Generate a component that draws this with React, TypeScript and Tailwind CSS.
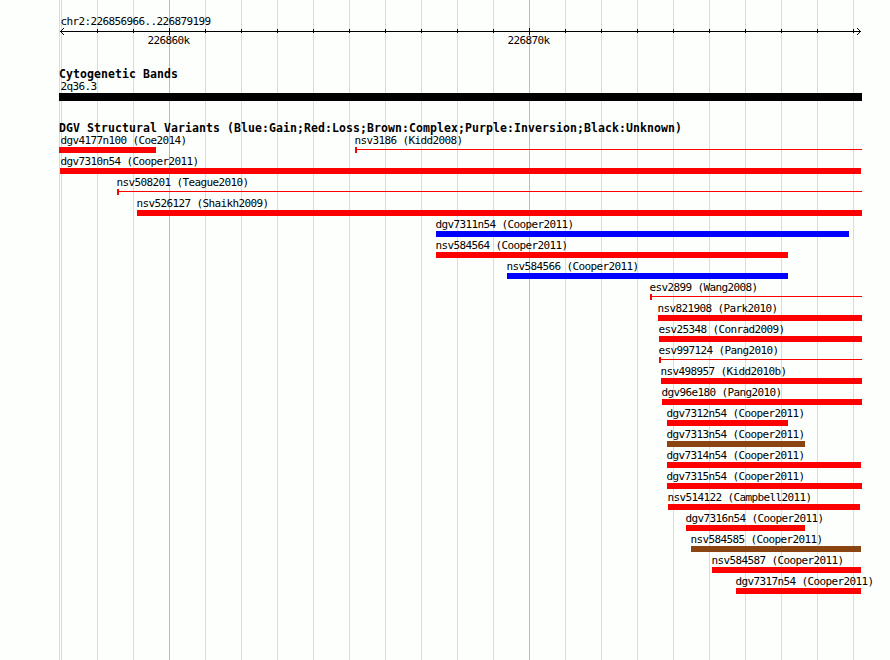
type Feature = {
  name: string
  start: number
  end: number
  labelX?: number
  color?: 'red' | 'blue' | 'brown'
  thin?: boolean
}

const barColors = {
  red: 'bg-[#ff0000]',
  blue: 'bg-[#0000ff]',
  brown: 'bg-[#8b4513]',
}

// every array is one row of the track
const rows: Feature[][] = [
  [
    { name: 'dgv4177n100 (Coe2014)', start: 59, end: 156, labelX: 60.5 },
    { name: 'nsv3186 (Kidd2008)', start: 355, end: 862, thin: true },
  ],
  [{ name: 'dgv7310n54 (Cooper2011)', start: 60, end: 861, labelX: 60.5 }],
  [{ name: 'nsv508201 (Teague2010)', start: 117, end: 862, thin: true }],
  [{ name: 'nsv526127 (Shaikh2009)', start: 137, end: 862 }],
  [{ name: 'dgv7311n54 (Cooper2011)', start: 436, end: 849, color: 'blue' }],
  [{ name: 'nsv584564 (Cooper2011)', start: 436, end: 788 }],
  [{ name: 'nsv584566 (Cooper2011)', start: 507, end: 788, color: 'blue' }],
  [{ name: 'esv2899 (Wang2008)', start: 650, end: 862, thin: true }],
  [{ name: 'nsv821908 (Park2010)', start: 658, end: 862 }],
  [{ name: 'esv25348 (Conrad2009)', start: 659, end: 862 }],
  [{ name: 'esv997124 (Pang2010)', start: 659, end: 862, thin: true }],
  [{ name: 'nsv498957 (Kidd2010b)', start: 661, end: 862 }],
  [{ name: 'dgv96e180 (Pang2010)', start: 662, end: 862 }],
  [{ name: 'dgv7312n54 (Cooper2011)', start: 667, end: 788 }],
  [{ name: 'dgv7313n54 (Cooper2011)', start: 667, end: 805, color: 'brown' }],
  [{ name: 'dgv7314n54 (Cooper2011)', start: 667, end: 861 }],
  [{ name: 'dgv7315n54 (Cooper2011)', start: 667, end: 862 }],
  [{ name: 'nsv514122 (Campbell2011)', start: 668, end: 860 }],
  [{ name: 'dgv7316n54 (Cooper2011)', start: 686, end: 805 }],
  [{ name: 'nsv584585 (Cooper2011)', start: 691, end: 861, color: 'brown' }],
  [{ name: 'nsv584587 (Cooper2011)', start: 712, end: 861 }],
  [{ name: 'dgv7317n54 (Cooper2011)', start: 736, end: 861 }],
]

// one tick per kilobase, 36px apart
const ticks = Array.from({ length: 23 }, (_, i) => 61 + i * 36)
const isMajor = (x: number) => x === 169 || x === 529

function GridLines() {
  return (
    <div className="absolute inset-0">
      {[59, ...ticks].map((x) => (
        <div
          key={x}
          className={`absolute inset-y-0 w-px ${isMajor(x) ? 'bg-[#87ceeb]' : 'bg-[#afeeee]'}`}
          style={{ left: x }}
        />
      ))}
    </div>
  )
}

function Ruler() {
  return (
    <svg className="block h-[7px] w-full" viewBox="0 0 890 7" shapeRendering="crispEdges">
      <rect x="60" y="3" width="801" height="1" />
      {ticks.slice(1).map((x) => (
        <rect key={x} x={x} y={isMajor(x) ? 0 : 1} width="1" height={isMajor(x) ? 7 : 4} />
      ))}
      {/* arrow heads */}
      {[1, 2, 3].map((d) => (
        <g key={d}>
          <rect x={60 + d} y={3 - d} width="1" height="1" />
          <rect x={60 + d} y={3 + d} width="1" height="1" />
          <rect x={860 - d} y={3 - d} width="1" height="1" />
          <rect x={860 - d} y={3 + d} width="1" height="1" />
        </g>
      ))}
    </svg>
  )
}

function FeatureItem({ name, start, end, labelX = start - 0.5, color = 'red', thin }: Feature) {
  return (
    <div className="[grid-area:1/1]">
      <div className="h-[13px] w-max" style={{ marginLeft: labelX }}>
        {name}
      </div>
      {thin ? (
        <div className="flex h-1.5" style={{ marginLeft: start, width: end - start }}>
          <div className="w-0.5 bg-[#ff0000]" />
          <div className="mt-0.5 h-px flex-1 bg-[#ff0000]" />
        </div>
      ) : (
        <div className={`h-1.5 ${barColors[color]}`} style={{ marginLeft: start, width: end - start }} />
      )}
    </div>
  )
}

export default function App() {
  return (
    <div className="relative h-[660px] w-[890px] overflow-hidden bg-[#fdfffc] font-['DejaVu_Sans_Mono',monospace] text-[11px] leading-[13px] tracking-[-0.622px] whitespace-pre text-black">
      <GridLines />
      <main className="relative pt-[15px]">
        <div className="h-[13px] pl-[60.5px]">chr2:226856966..226879199</div>
        <Ruler />
        <div className="-mt-px flex h-[13px] pl-[147.5px]">
          <span className="w-[360px]">226860k</span>
          <span>226870k</span>
        </div>

        <section className="mt-[21px]">
          <h2 className="h-3 pl-[59px] text-[11.5px] font-bold tracking-[0.077px]">Cytogenetic Bands</h2>
          <div className="h-[13px] pl-[60.5px]">2q36.3</div>
          <div className="ml-[59px] h-2 w-[803px] bg-black" />
        </section>

        <section className="mt-[21px]">
          <h2 className="h-3 pl-[59px] text-[11.5px] font-bold tracking-[0.077px]">
            DGV Structural Variants (Blue:Gain;Red:Loss;Brown:Complex;Purple:Inversion;Black:Unknown)
          </h2>
          <div className="flex flex-col gap-0.5">
            {rows.map((row) => (
              <div key={row[0].name} className="grid h-[19px]">
                {row.map((feature) => (
                  <FeatureItem key={feature.name} {...feature} />
                ))}
              </div>
            ))}
          </div>
        </section>
      </main>
    </div>
  )
}
